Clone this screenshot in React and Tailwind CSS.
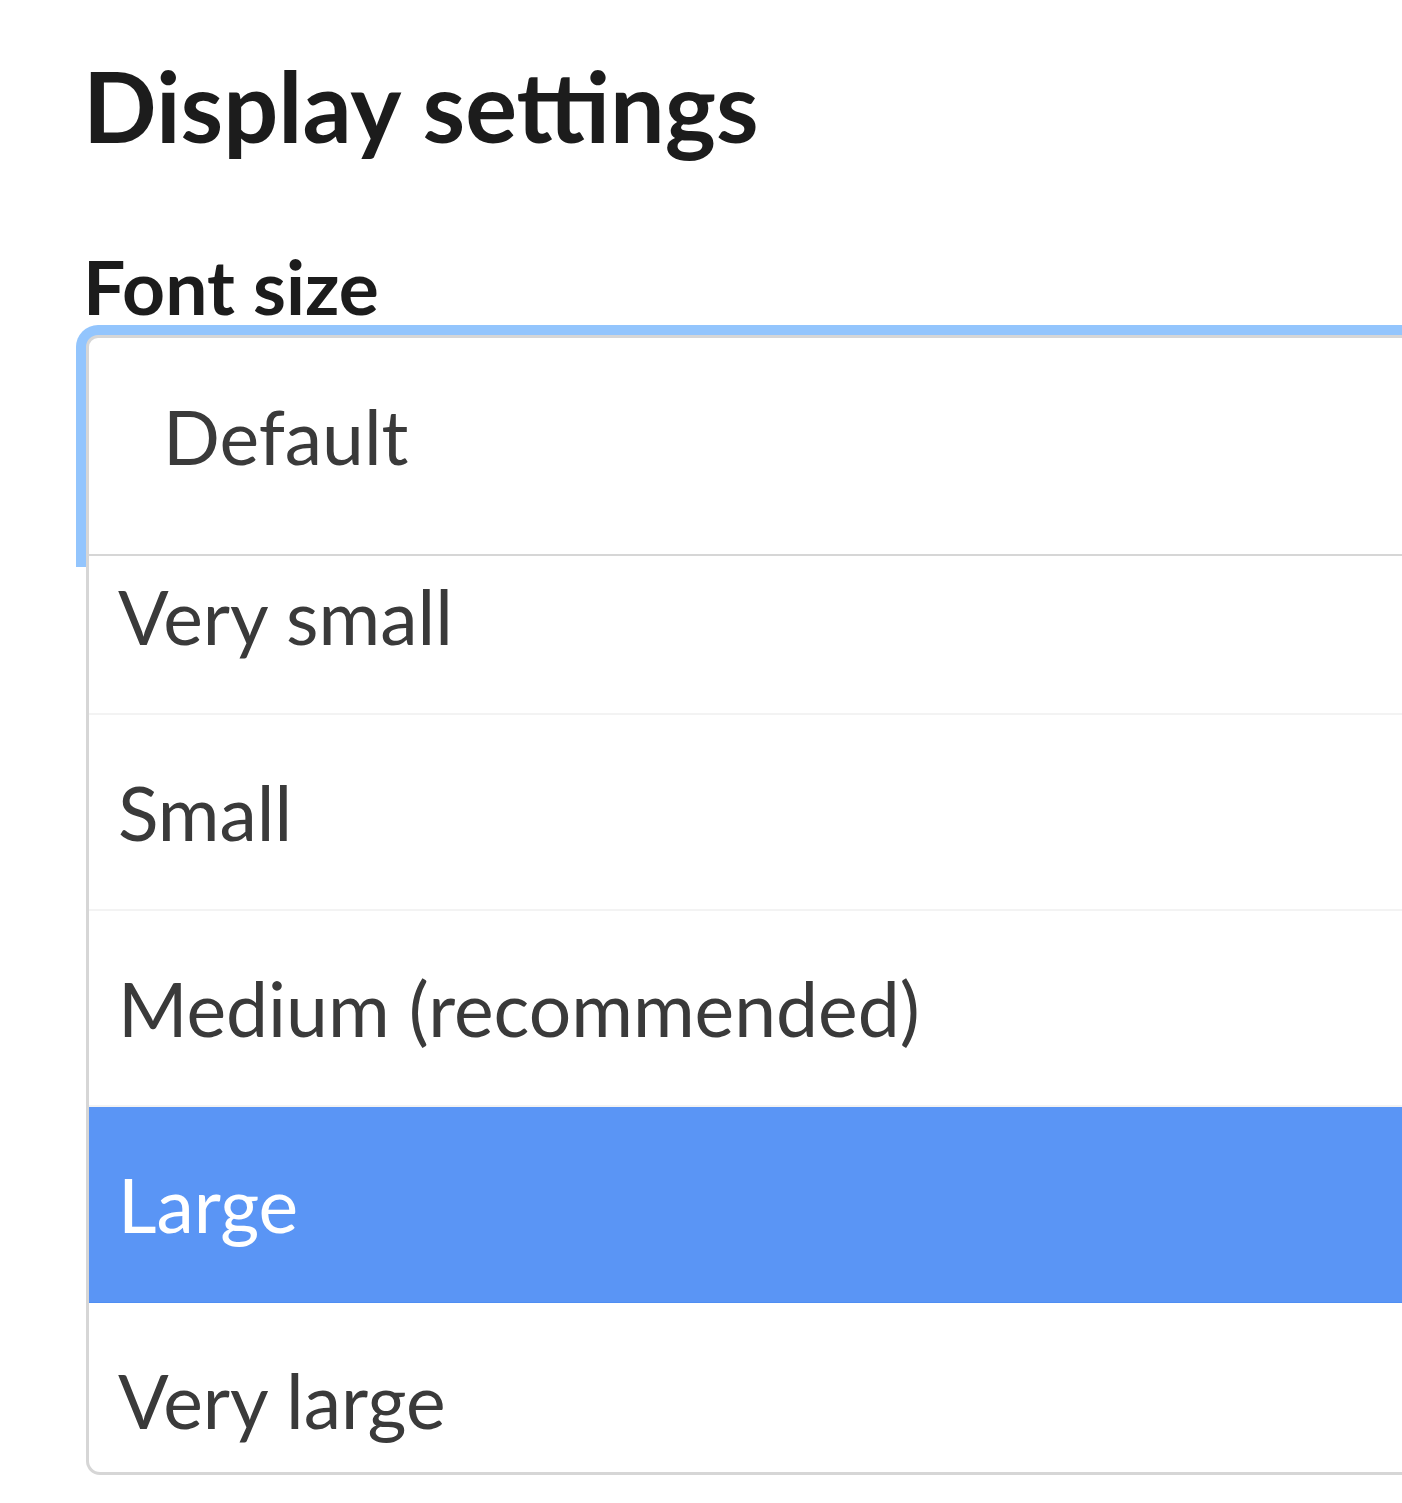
import React from 'react'

const options = ['Very small', 'Small', 'Medium (recommended)', 'Large', 'Very large']

export default function App() {
  const selected = 'Large'

  return (
    <div className="w-[1402px] h-[1503px] overflow-hidden bg-white pl-[86px] pt-[57px] font-['Lato','Noto_Sans',sans-serif]">
      <h1 className="-ml-[3px] text-[97px] font-bold leading-none text-[#1c1c1c] whitespace-nowrap">Display settings</h1>

      <label className="block -ml-[3px] mt-[95px] text-[75px] font-bold leading-none text-[#1c1c1c] whitespace-nowrap">Font size</label>

      <div className="mt-[11px] w-[1400px]">
        {/* closed part of the select, focused */}
        <div className="h-[222px] border-[3px] border-[#d6d6d6] rounded-t-[12px] shadow-[0_0_0_10px_#93c5fd] bg-white pl-[74px] pt-[61px]">
          <span className="block text-[75px] leading-none text-[#3a3a3a]">Default</span>
        </div>

        {/* open list */}
        <div className="relative z-10 h-[919px] -mt-[1px] border-[3px] border-t-0 border-[#d6d6d6] rounded-b-[14px] bg-white overflow-hidden">
          <ul className="-mt-[37px]">
            {options.map(o => (
              <li key={o}
                className={o === selected
                  ? 'h-[196px] flex items-center pl-[29px] text-[75px] leading-none bg-[#5a95f5] text-white border-b border-[#4f8ef3]'
                  : 'h-[196px] flex items-center pl-[29px] text-[75px] leading-none text-[#3a3a3a] border-b-2 border-[#f3f3f3]'}>
                {o}
              </li>
            ))}
          </ul>
        </div>
      </div>
    </div>
  )
}
